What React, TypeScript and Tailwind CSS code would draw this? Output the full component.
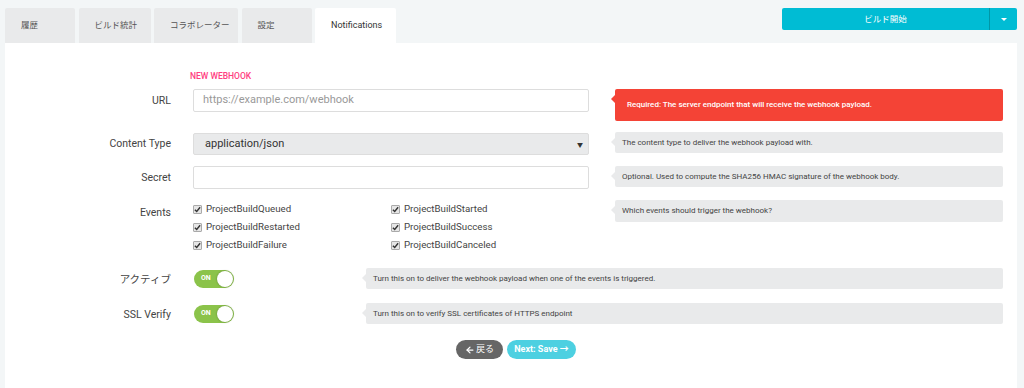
import React from 'react';
import { ArrowLeft } from 'lucide-react';

const font = { fontFamily: 'Roboto, "Noto Sans CJK JP", sans-serif' };

const tabs = [
  { label: '履歴', w: 'w-[70px]' },
  { label: 'ビルド統計', w: 'w-[72px]' },
  { label: 'コラボレーター', w: 'w-[84px]' },
  { label: '設定', w: 'w-[70px]' },
];

const events = [
  'ProjectBuildQueued',
  'ProjectBuildStarted',
  'ProjectBuildRestarted',
  'ProjectBuildSuccess',
  'ProjectBuildFailure',
  'ProjectBuildCanceled',
];

const Help: React.FC<{ children: React.ReactNode; red?: boolean; className?: string }> = ({
  children,
  red,
  className = '',
}) => (
  <div
    className={`relative flex items-center rounded-[2px] text-[8px] ${
      red ? 'bg-[#f44336] text-white font-medium pl-[12px]' : 'bg-[#e9eaeb] text-[#444] pl-[7px]'
    } ${className}`}
  >
    <span
      className={`absolute left-[-4px] top-[6px] w-0 h-0 border-y-[4px] border-y-transparent border-r-[4px] ${
        red ? 'border-r-[#f44336]' : 'border-r-[#e9eaeb]'
      }`}
    />
    {children}
  </div>
);

const Check: React.FC<{ label: string }> = ({ label }) => (
  <div className="flex items-center h-[18px] gap-[4px]">
    <span className="w-[9px] h-[9px] rounded-[1px] border border-[#aaa] bg-[#e6e6e6] flex items-center justify-center">
      <svg width="7" height="7" viewBox="0 0 8 8">
        <path d="M1 4.2 L3.1 6.3 L7 1.5" fill="none" stroke="#333" strokeWidth="1.6" />
      </svg>
    </span>
    <span className="text-[9.7px] text-[#444]">{label}</span>
  </div>
);

const Toggle: React.FC = () => (
  <div className="relative w-[40px] h-[18px] rounded-full bg-[#8bc34a] flex items-center">
    <span className="ml-[7px] text-[7px] font-bold text-white">ON</span>
    <span className="absolute right-[1px] top-[1px] w-[16px] h-[16px] rounded-full bg-white shadow-[0_0_2px_rgba(0,0,0,0.35)]" />
  </div>
);

const Label: React.FC<{ children: React.ReactNode; className?: string }> = ({ children, className = '' }) => (
  <div className={`w-[166px] shrink-0 text-right text-[10.5px] text-[#444] ${className}`}>{children}</div>
);

const App: React.FC = () => {
  return (
    <div className="w-[1024px] h-[388px] bg-[#f3f6f7] pl-[5px] pr-[7px] flex flex-col overflow-hidden" style={font}>
      <div className="h-[43px] pt-[8px] flex justify-between shrink-0">
        <div className="flex items-stretch gap-[3.5px]">
          {tabs.map((t) => (
            <div
              key={t.label}
              className={`${t.w} bg-[#e9eaeb] rounded-t-[2px] pl-[16px] flex items-center text-[8.5px] text-[#555]`}
            >
              {t.label}
            </div>
          ))}
          <div className="w-[81px] bg-white rounded-t-[2px] pl-[16px] flex items-center text-[9px] text-[#333]">
            Notifications
          </div>
        </div>
        <div className="flex h-[22px] rounded-[2px] overflow-hidden">
          <button className="w-[207px] bg-[#00bcd4] text-white text-[8.5px] flex items-center justify-center">
            ビルド開始
          </button>
          <button className="w-[28px] bg-[#00bcd4] border-l border-[#0097a7] flex items-center justify-center">
            <span className="w-0 h-0 border-x-[3px] border-x-transparent border-t-[3px] border-t-white" />
          </button>
        </div>
      </div>

      <div className="flex-1 bg-white pt-[28px] flex flex-col">
        <div className="pl-[185px] h-[11px] mb-[7px] text-[8.5px] font-medium text-[#ff4081] leading-[11px]">
          NEW WEBHOOK
        </div>

        <div className="flex items-start">
          <Label className="h-[23px] flex items-center justify-end">URL</Label>
          <div className="ml-[22px] w-[396px] h-[23px] border border-[#ddd] rounded-[2px] pl-[9px] flex items-center text-[11px] text-[#999]">
            https://example.com/webhook
          </div>
          <Help red className="ml-[26px] w-[388px] h-[32px]">
            Required: The server endpoint that will receive the webhook payload.
          </Help>
        </div>

        <div className="flex items-start mt-[11px]">
          <Label className="h-[23px] flex items-center justify-end">Content Type</Label>
          <div className="ml-[22px] mt-[1px] w-[396px] h-[22px] border border-[#ddd] bg-[#e9eaeb] rounded-[2px] pl-[11px] pr-[5px] flex items-center justify-between text-[11px] text-[#333]">
            <span>application/json</span>
            <span className="text-[6px] text-[#333]">▼</span>
          </div>
          <Help className="ml-[26px] w-[388px] h-[21px]">The content type to deliver the webhook payload with.</Help>
        </div>

        <div className="flex items-start mt-[11px]">
          <Label className="h-[23px] flex items-center justify-end">Secret</Label>
          <div className="ml-[22px] w-[396px] h-[23px] border border-[#ddd] rounded-[2px]" />
          <Help className="ml-[26px] w-[388px] h-[21px]">
            Optional. Used to compute the SHA256 HMAC signature of the webhook body.
          </Help>
        </div>

        <div className="flex items-start mt-[11px]">
          <Label className="pt-[5px]">Events</Label>
          <div className="ml-[22px] w-[396px] grid grid-cols-2">
            {events.map((e) => (
              <Check key={e} label={e} />
            ))}
          </div>
          <Help className="ml-[26px] w-[388px] h-[22px]">Which events should trigger the webhook?</Help>
        </div>

        <div className="flex items-center mt-[14px] h-[21px]">
          <Label className="pt-[2px]">アクティブ</Label>
          <div className="ml-[23px] w-[172px]">
            <Toggle />
          </div>
          <Help className="w-[637px] h-[21px]">
            Turn this on to deliver the webhook payload when one of the events is triggered.
          </Help>
        </div>

        <div className="flex items-center mt-[14px] h-[21px]">
          <Label className="pt-[2px]">SSL Verify</Label>
          <div className="ml-[23px] w-[172px]">
            <Toggle />
          </div>
          <Help className="w-[637px] h-[21px]">Turn this on to verify SSL certificates of HTTPS endpoint</Help>
        </div>

        <div className="mt-[16px] flex justify-center gap-[4px] pl-[10px]">
          <button className="w-[47px] h-[19px] rounded-full bg-[#666] text-white text-[9px] flex items-center justify-center gap-[1px]">
            <ArrowLeft className="w-[10px] h-[10px]" strokeWidth={3} />
            戻る
          </button>
          <button className="w-[69px] h-[19px] rounded-full bg-[#4dd0e1] text-white text-[9px] font-bold flex items-center justify-center">
            Next: Save →
          </button>
        </div>
      </div>
    </div>
  );
};

export default App;
